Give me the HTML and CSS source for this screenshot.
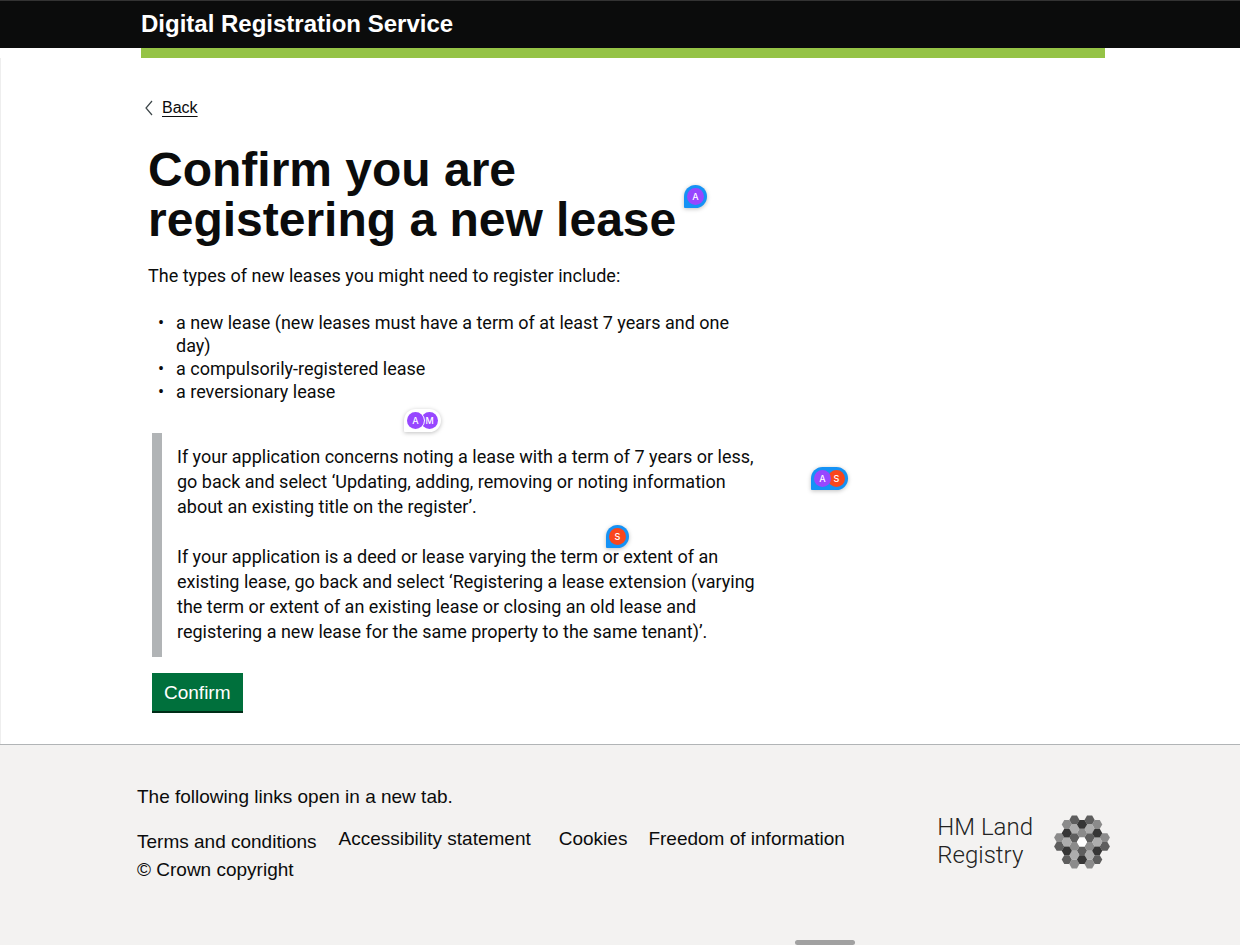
FILE: index.html
```html
<!DOCTYPE html>
<html lang="en">
<head>
<meta charset="utf-8">
<meta name="viewport" content="width=device-width, initial-scale=1">
<title>Confirm you are registering a new lease</title>
<link rel="stylesheet" href="styles.css">
</head>
<body>
<header class="header"><span class="service">Digital Registration Service</span></header>
<div class="accent"></div>
<main class="main">
  <a class="back" href="#"><svg class="back-icon" width="8" height="16" viewBox="0 0 8 16"><path d="M7 1 L1 8 L7 15" fill="none" stroke="#3d4649" stroke-width="1.2"/></svg><span class="back-label">Back</span></a>
  <h1 class="title">Confirm you are<br>registering a new lease</h1>
  <p class="lead">The types of new leases you might need to register include:</p>
  <ul class="types">
    <li>a new lease (new leases must have a term of at least 7 years and one<br>day)</li>
    <li>a compulsorily-registered lease</li>
    <li>a reversionary lease</li>
  </ul>
  <div class="inset">
    <p>If your application concerns noting a lease with a term of 7 years or less,<br>go back and select ‘Updating, adding, removing or noting information<br>about an existing title on the register’.</p>
    <p>If your application is a deed or lease varying the term or extent of an<br>existing lease, go back and select ‘Registering a lease extension (varying<br>the term or extent of an existing lease or closing an old lease and<br>registering a new lease for the same property to the same tenant)’.</p>
  </div>
  <button class="confirm" type="button">Confirm</button>
  <div class="pin pin-blue pin-title"><span class="face purple">A</span></div>
  <div class="pin pin-white pin-list"><span class="face purple">A</span><span class="face purple">M</span></div>
  <div class="pin pin-blue pin-side"><span class="face purple">A</span><span class="face red">S</span></div>
  <div class="pin pin-blue pin-inset"><span class="face red">S</span></div>
</main>
<footer class="footer">
  <div class="footer-text">
    <p class="note">The following links open in a new tab.</p>
    <div class="footer-row">
      <div class="legal"><a href="#">Terms and conditions</a><span>© Crown copyright</span></div>
      <nav class="links"><a href="#">Accessibility statement</a><a href="#">Cookies</a><a href="#">Freedom of information</a></nav>
    </div>
  </div>
  <div class="brand">
    <div class="brand-name"><span>HM Land</span><span>Registry</span></div>
    <svg class="brand-mark" width="56" height="54" viewBox="-28 -27 56 54" aria-hidden="true">
      <defs><path id="h" d="M-5.1 0 L-2.55 -4.4 L2.55 -4.4 L5.1 0 L2.55 4.4 L-2.55 4.4 Z"/></defs>
      <g fill="#5e5e5e"><use href="#h" x="-22.8" y="4.4"/><use href="#h" x="-15.2" y="17.6"/><use href="#h" x="-7.6" y="-22"/><use href="#h" x="-7.6" y="-4.4"/><use href="#h" x="0" y="8.8"/><use href="#h" x="7.6" y="-22"/><use href="#h" x="7.6" y="-4.4"/><use href="#h" x="15.2" y="17.6"/><use href="#h" x="22.8" y="4.4"/></g>
      <g fill="#8b8b8b"><use href="#h" x="-22.8" y="-4.4"/><use href="#h" x="-15.2" y="-17.6"/><use href="#h" x="-7.6" y="4.4"/><use href="#h" x="-7.6" y="22"/><use href="#h" x="0" y="-8.8"/><use href="#h" x="7.6" y="4.4"/><use href="#h" x="7.6" y="22"/><use href="#h" x="15.2" y="-17.6"/><use href="#h" x="22.8" y="-4.4"/></g>
      <g fill="#adadad"><use href="#h" x="-15.2" y="0"/><use href="#h" x="-7.6" y="-13.2"/><use href="#h" x="-7.6" y="13.2"/><use href="#h" x="7.6" y="-13.2"/><use href="#h" x="7.6" y="13.2"/><use href="#h" x="15.2" y="0"/></g>
      <g fill="#363636"><use href="#h" x="-15.2" y="-8.8"/><use href="#h" x="-15.2" y="8.8"/><use href="#h" x="0" y="-17.6"/><use href="#h" x="0" y="17.6"/><use href="#h" x="15.2" y="-8.8"/><use href="#h" x="15.2" y="8.8"/></g>
      <use href="#h" fill="#fff"/>
    </svg>
  </div>
  <div class="scroll-thumb"></div>
</footer>
</body>
</html>
```
FILE: styles.css
```css
* { box-sizing: border-box; }
body {
  margin: 0;
  min-height: 100vh;
  display: flex;
  flex-direction: column;
  background: #fff;
  color: #0b0c0c;
  font-family: "Liberation Sans", Arial, sans-serif;
}
p, h1, ul { margin: 0; }
a { color: inherit; text-decoration: none; }

.header {
  padding: 9px 141px 10px;
  display: flex;
  align-items: center;
  background: #0b0c0c;
  border-top: 1px solid #333;
  color: #fff;
}
.service { font-size: 24px; line-height: 28px; font-weight: 700; }
.accent { height: 10px; margin: 0 135px 0 141px; background: #95c346; }

.main {
  position: relative;
  padding: 39px 135px 31px 147px;
  border-left: 1px solid #eee;
  font-family: Roboto, sans-serif;
  font-size: 18px;
}
.back {
  display: flex;
  align-items: center;
  gap: 9px;
  width: max-content;
  margin-left: -3px;
  font: 16px/22px "Liberation Sans", Arial, sans-serif;
}
.back-label { text-decoration: underline; text-underline-offset: 3px; }
.title {
  margin-top: 26px;
  font: 700 48px/50px "Liberation Sans", Arial, sans-serif;
}
.lead { margin-top: 19px; line-height: 24px; }
.types {
  margin-top: 23px;
  padding: 0;
  list-style: none;
  line-height: 23px;
}
.types li { position: relative; padding-left: 28px; }
.types li::before { content: "•"; position: absolute; left: 10px; }
.inset {
  display: grid;
  gap: 25px;
  margin: 30px 0 16px 4px;
  padding: 11px 0 13px 15px;
  border-left: 10px solid #b1b4b6;
  line-height: 25px;
}
.confirm {
  display: block;
  margin-left: 4px;
  padding: 9px 12px 7px;
  border: 0;
  border-bottom: 2px solid #002d18;
  background: #00703c;
  color: #fff;
  font: 19px/22px "Liberation Sans", Arial, sans-serif;
}

.pin {
  position: absolute;
  display: flex;
  padding: 3px;
  border-radius: 12px 12px 12px 1px;
  box-shadow: 0 1px 4px rgba(0, 0, 0, 0.25);
}
.pin-blue { background: #1592f5; }
.pin-white { background: #fff; }
.face {
  width: 17px;
  height: 17px;
  border-radius: 50%;
  color: #fff;
  font: 500 9px/17px Inter, sans-serif;
  text-align: center;
}
.face + .face { margin-left: -3px; }
.purple { background: #9747ff; }
.red { background: #f9461c; }
.pin-title { left: 683px; top: 127px; }
.pin-list { left: 403px; top: 351px; }
.pin-list .face:first-child { z-index: 1; box-shadow: 1px 0 0 #fff; }
.pin-side { left: 810px; top: 409px; }
.pin-side .face:first-child { z-index: 1; }
.pin-inset { left: 605px; top: 467px; }

.footer {
  position: relative;
  flex: 1;
  display: flex;
  justify-content: space-between;
  align-items: flex-start;
  padding: 40px 130px 40px 137px;
  background: #f3f2f1;
  border-top: 1px solid #b1b4b6;
  font-size: 19px;
  line-height: 28px;
}
.note { line-height: 24px; }
.footer-row { display: flex; gap: 22px; margin-top: 16px; }
.legal { display: flex; flex-direction: column; margin-top: 3px; }
.links { display: flex; }
.links a { margin-right: 21px; }
.links a:first-child { margin-right: 28px; }
.brand { display: flex; gap: 21px; margin-top: 28px; }
.brand-name {
  display: flex;
  flex-direction: column;
  font: 300 24px/28px Roboto, sans-serif;
  color: #222;
}
.brand-mark { margin-top: 2px; }
.scroll-thumb {
  position: absolute;
  left: 795px;
  bottom: 0;
  width: 60px;
  height: 5px;
  border-radius: 3px;
  background: #a1a1a1;
}
```
